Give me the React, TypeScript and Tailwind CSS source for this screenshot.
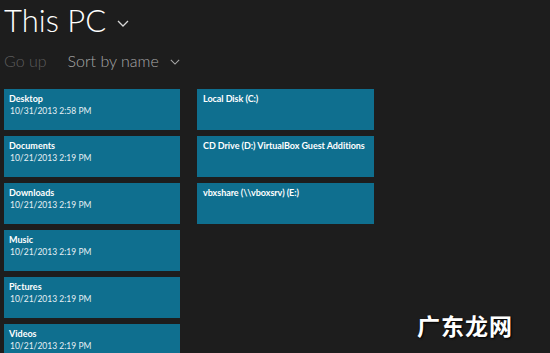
const folders = [
    { name: "Desktop", date: "10/31/2013 2:58 PM" },
    { name: "Documents", date: "10/21/2013 2:19 PM" },
    { name: "Downloads", date: "10/21/2013 2:19 PM" },
    { name: "Music", date: "10/21/2013 2:19 PM" },
    { name: "Pictures", date: "10/21/2013 2:19 PM" },
    { name: "Videos", date: "10/21/2013 2:19 PM" },
]

const drives = [
    "Local Disk (C:)",
    "CD Drive (D:) VirtualBox Guest Additions",
    "vbxshare (\\\\vboxsrv) (E:)",
]

function Chevron({ className }: { className: string }) {
    return (
        <svg viewBox="0 0 12 7" className={className} fill="none" stroke="currentColor" strokeWidth="1.3">
            <path d="M1 1l5 5 5-5" />
        </svg>
    )
}

export default function App() {
    return (
        <div className="relative w-[550px] h-[353px] overflow-hidden bg-[#1d1d1d] font-['Lato',sans-serif]">
            <header className="pl-[4px]">
                <div className="flex items-center gap-[11px] h-[40px]">
                    <h1 className="text-[31px] leading-[40px] font-light text-white">This PC</h1>
                    <Chevron className="w-[12px] h-[7px] text-[#d8d8d8] mt-[6px]" />
                </div>
                <div className="flex items-center h-[42px] text-[16px] font-light">
                    <span className="text-[#5c5c5c]">Go up</span>
                    <span className="ml-[21px] text-[#a8a8a8]">Sort by name</span>
                    <Chevron className="ml-[11px] w-[10px] h-[6px] text-[#a8a8a8] mt-[2px]" />
                </div>
            </header>
            <main className="flex gap-[17px] pl-[4px] pt-[7px]">
                <ul className="flex flex-col gap-[6px] w-[176px]">
                    {folders.map((f) => (
                        <li key={f.name} className="h-[41px] shrink-0 bg-[#0f6f8f] px-[5px] pt-[4px]">
                            <p className="text-white text-[9px] font-bold leading-[12px]">{f.name}</p>
                            <p className="text-[#e6f0f4] text-[8.5px] leading-[12px] pl-px">{f.date}</p>
                        </li>
                    ))}
                </ul>
                <ul className="flex flex-col gap-[6px] w-[177px]">
                    {drives.map((d) => (
                        <li key={d} className="h-[41px] bg-[#0f6f8f] px-[6px] pt-[4px]">
                            <p className="text-white text-[9px] font-bold leading-[12px] whitespace-nowrap tracking-[-0.05px]">{d}</p>
                        </li>
                    ))}
                </ul>
            </main>
            <div className="absolute left-[417px] top-[308px] text-white text-[23px] font-bold tracking-[1px] font-['Noto_Sans_CJK_SC',sans-serif] [text-shadow:1px_1px_2px_#000]">
                广东龙网
            </div>
        </div>
    )
}
